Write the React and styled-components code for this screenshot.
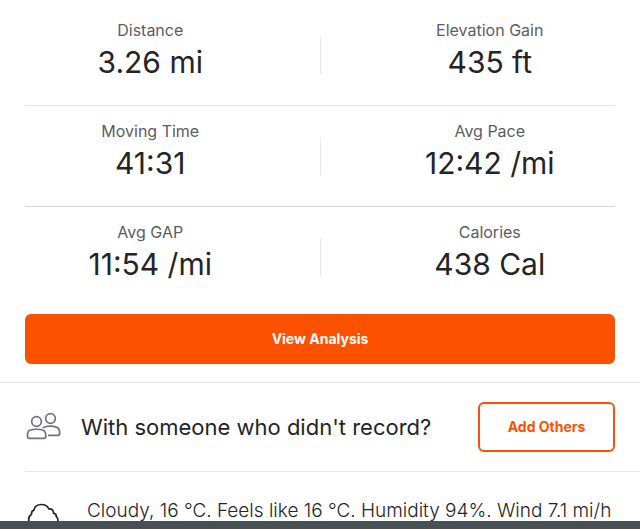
import React from "react";
import styled, { createGlobalStyle } from "styled-components";

const GlobalStyle = createGlobalStyle`
  *, *::before, *::after { box-sizing: border-box; }
  body {
    margin: 0;
    background: #fff;
    color: #242428;
    font-family: Inter, "Liberation Sans", sans-serif;
  }
`;

const Page = styled.div`
  display: flex;
  flex-direction: column;
  height: 100vh;
  overflow: hidden;
`;

const Content = styled.main`
  flex: 1;
  min-height: 0;
  overflow: hidden;
`;

const BottomBar = styled.div`
  flex: none;
  height: 8px;
  background: #475054;
`;

const Stats = styled.section`
  padding: 5px 25px 0;
`;

const StatRow = styled.div`
  display: grid;
  grid-template-columns: 1fr 1px 1fr;
  column-gap: 44px;
  padding: 13px 0 22px;
  border-bottom: 1px solid ${(p) => p.$line};
`;

const Separator = styled.div`
  align-self: center;
  height: 37px;
  margin-top: 10px;
  background: #e6e6eb;
`;

const Stat = styled.dl`
  display: flex;
  flex-direction: column;
  align-items: center;
  margin: 0;
  white-space: nowrap;
`;

const StatLabel = styled.dt`
  font-size: 16px;
  line-height: 24px;
  font-weight: 400;
  color: #5c5c64;
`;

const StatValue = styled.dd`
  margin: 0;
  font-size: 30px;
  line-height: 41px;
  font-weight: 400;
`;

const Action = styled.div`
  padding: 6px 25px 18px;
  border-bottom: 1px solid #e6e6eb;
`;

const Button = styled.button`
  height: 50px;
  width: ${(p) => (p.$wide ? "100%" : "137px")};
  flex: none;
  padding: 0;
  border: 2px solid #fc5200;
  border-radius: 6px;
  background: ${(p) => (p.$wide ? "#fc5200" : "#fff")};
  color: ${(p) => (p.$wide ? "#fff" : "#fc5200")};
  font: 700 14px/20px Inter, "Liberation Sans", sans-serif;
  cursor: pointer;
`;

const InfoRow = styled.section`
  display: flex;
  align-items: center;
  margin-left: 25px;
  padding: ${(p) => (p.$divided ? "19px 25px 19px 0" : "24px 0 0")};
  border-bottom: ${(p) => (p.$divided ? "1px solid #e6e6eb" : "0")};
`;

const IconSlot = styled.div`
  display: flex;
  flex: none;
  width: ${(p) => p.$width};
`;

const Prompt = styled.p`
  flex: 1;
  margin: 0;
  font-size: 22px;
  line-height: 30px;
  font-weight: 400;
  white-space: nowrap;
`;

const Weather = styled.p`
  margin: 0;
  font-size: 19px;
  line-height: 30px;
  font-weight: 300;
  white-space: nowrap;
`;

const PeopleIcon = () => (
  <svg width="37" height="30" viewBox="0 0 37 30" fill="none" stroke="#72727c" strokeWidth="1.700" strokeLinejoin="round" aria-hidden="true">
    <circle cx="11.500" cy="9.500" r="4.800" />
    <circle cx="25.500" cy="6.500" r="4.800" />
    <path d="M2.500 24c0-3.700.7-5 2.300-5.700 3.500-1.400 10-1.400 13.500 0 1.600.7 2.500 2 2.500 5.700 0 1.700-.5 2.300-1.700 2.300H4.200c-1.200 0-1.700-.6-1.700-2.300Z" />
    <path d="M17.500 15.700c4.500-1.800 10.500-1.800 14.500-.3 1.900.8 2.700 2.200 2.700 5.900 0 1.500-.5 2-1.800 2H23" />
  </svg>
);

const CloudIcon = () => (
  <svg width="37" height="30" viewBox="0 0 37 30" fill="none" stroke="#242428" strokeWidth="1.700" strokeLinejoin="round" aria-hidden="true">
    <path d="M8 29c-5-1-5.600-8.500-1.500-10.500-.2-2.200.5-3.700 2.300-4.200C9.600 10.600 12.500 8.500 16.300 8.500c3.900 0 6.300 1.500 7.600 4.500 3.200-.3 4.700 1.300 4.500 4.200 2.200.4 3 1.500 2.800 3.300 2.800 2.200 2.100 7.700-1.200 8.500Z" />
  </svg>
);

const rows = [
  { line: "#e6e6eb", stats: [["Distance", "3.26 mi"], ["Elevation Gain", "435 ft"]] },
  { line: "#d5d5df", stats: [["Moving Time", "41:31"], ["Avg Pace", "12:42 /mi"]] },
  { line: "transparent", stats: [["Avg GAP", "11:54 /mi"], ["Calories", "438 Cal"]] },
];

function StatItem({ label, value }) {
  return (
    <Stat>
      <StatLabel>{label}</StatLabel>
      <StatValue>{value}</StatValue>
    </Stat>
  );
}

export default function App() {
  return (
    <Page>
      <GlobalStyle />
      <Content>
        <Stats>
          {rows.map(({ line, stats: [left, right] }) => (
            <StatRow key={left[0]} $line={line}>
              <StatItem label={left[0]} value={left[1]} />
              <Separator />
              <StatItem label={right[0]} value={right[1]} />
            </StatRow>
          ))}
        </Stats>
        <Action>
          <Button type="button" $wide>View Analysis</Button>
        </Action>
        <InfoRow $divided>
          <IconSlot $width="56px"><PeopleIcon /></IconSlot>
          <Prompt>With someone who didn't record?</Prompt>
          <Button type="button">Add Others</Button>
        </InfoRow>
        <InfoRow>
          <IconSlot $width="62px"><CloudIcon /></IconSlot>
          <Weather>Cloudy, 16 ℃. Feels like 16 ℃. Humidity 94%. Wind 7.1 mi/h</Weather>
        </InfoRow>
      </Content>
      <BottomBar />
    </Page>
  );
}
